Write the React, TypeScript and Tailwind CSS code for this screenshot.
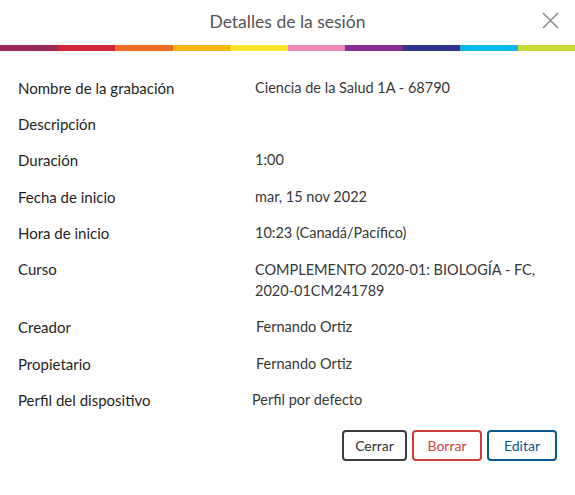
const stripe = [
  'bg-[#9c2b5c]',
  'bg-[#d0263c]',
  'bg-[#ee6a24]',
  'bg-[#fbb616]',
  'bg-[#fce529]',
  'bg-[#ee8bb9]',
  'bg-[#862e8b]',
  'bg-[#2f3489]',
  'bg-[#0ab9e5]',
  'bg-[#c9d932]',
];

function Row({
  label,
  children,
  valueClass = '',
}: {
  label: string;
  children?: React.ReactNode;
  valueClass?: string;
}) {
  return (
    <div className="flex py-[8.15px]">
      <div className="w-[237px] shrink-0 text-[15px] leading-5 text-[#1f1f1f]">{label}</div>
      <div className={`text-[14.5px] leading-5 text-[#383838] ${valueClass}`}>{children}</div>
    </div>
  );
}

export default function App() {
  return (
    <div className="h-[495px] w-[575px] bg-white font-['Lato',sans-serif]">
      {/* header */}
      <div className="relative flex h-[45px] items-center justify-center">
        <h1 className="text-[17.5px] text-[#555]">Detalles de la sesión</h1>
        <button className="absolute right-[16px] top-[12px] text-[#8a8a8a]" aria-label="Cerrar">
          <svg width="17" height="17" viewBox="0 0 17 17" fill="none" stroke="currentColor" strokeWidth="1.5">
            <path d="M1 1L16 16M16 1L1 16" />
          </svg>
        </button>
      </div>
      <div className="flex h-[6px]">
        {stripe.map((c) => (
          <div key={c} className={`flex-1 ${c}`} />
        ))}
      </div>

      {/* details */}
      <div className="px-[18px] pt-[18.6px]">
        <Row label="Nombre de la grabación">Ciencia de la Salud 1A - 68790</Row>
        <Row label="Descripción" />
        <Row label="Duración">1:00</Row>
        <Row label="Fecha de inicio">mar, 15 nov 2022</Row>
        <Row label="Hora de inicio">10:23 (Canadá/Pacífico)</Row>
        <Row label="Curso" valueClass="!leading-[21px]">
          COMPLEMENTO 2020-01: BIOLOGÍA - FC,
          <br />
          2020-01CM241789
        </Row>
        <Row label="Creador" valueClass="ml-[1px]">Fernando Ortiz</Row>
        <Row label="Propietario" valueClass="ml-[1px]">Fernando Ortiz</Row>
        <Row label="Perfil del dispositivo" valueClass="-ml-[3px]">Perfil por defecto</Row>
      </div>

      {/* actions */}
      <div className="mt-[12px] flex justify-end gap-[5px] pr-[18px]">
        <button className="h-[31px] w-[65px] rounded-[4px] border-2 border-[#3d3d3d] text-[14px] text-[#333]">
          Cerrar
        </button>
        <button className="h-[31px] w-[70px] rounded-[4px] border-2 border-[#cf3b3b] text-[14px] text-[#d04545]">
          Borrar
        </button>
        <button className="h-[31px] w-[70px] rounded-[4px] border-2 border-[#0b5895] text-[14px] text-[#0b5895]">
          Editar
        </button>
      </div>
    </div>
  );
}
